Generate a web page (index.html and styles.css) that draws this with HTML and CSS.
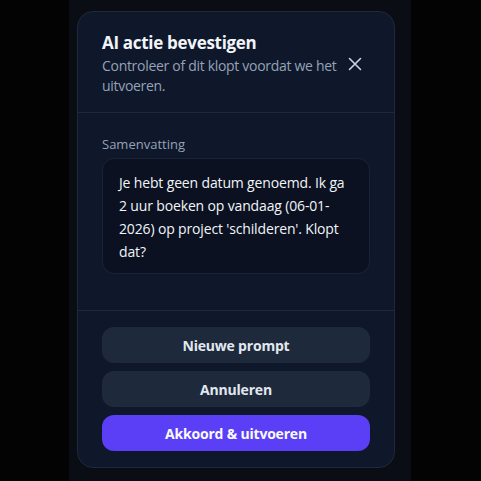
FILE: index.html
```html
<!DOCTYPE html>
<html lang="nl">
<head>
  <meta charset="UTF-8" />
  <meta name="viewport" content="width=device-width, initial-scale=1.0" />
  <title>AI actie bevestigen</title>
  <link rel="stylesheet" href="styles.css">
</head>
<body>
  <div class="app">
    <div class="modal">
      <!-- Header -->
      <div class="modal-head">
        <div class="head-text">
          <h2>AI actie bevestigen</h2>
          <p>Controleer of dit klopt voordat we het uitvoeren.</p>
        </div>
        <button class="close" aria-label="Sluiten">
          <svg width="14" height="14" viewBox="0 0 14 14" fill="none" stroke="currentColor" stroke-width="1.6" stroke-linecap="round">
            <path d="M1.5 1.5 L12.5 12.5 M12.5 1.5 L1.5 12.5" />
          </svg>
        </button>
      </div>

      <!-- Body -->
      <div class="modal-body">
        <div class="label">Samenvatting</div>
        <div class="summary">
          Je hebt geen datum genoemd. Ik ga 2 uur boeken op vandaag (06-01-2026) op project 'schilderen'. Klopt dat?
        </div>
      </div>

      <!-- Actions -->
      <div class="modal-actions">
        <button class="btn">Nieuwe prompt</button>
        <button class="btn">Annuleren</button>
        <button class="btn primary">Akkoord &amp; uitvoeren</button>
      </div>
    </div>
  </div>
</body>
</html>
```

FILE: styles.css
```css
* {
  box-sizing: border-box;
}

body {
  margin: 0;
  background: #030303;
  font-family: "Open Sans", "Noto Sans", sans-serif;
  color: #e2e8f0;
}

.app {
  width: 342px;
  min-height: 481px;
  margin-left: 69px;
  background: #0a0d14;
  padding: 11px 8px;
}

.modal {
  width: 318px;
  background: #0f172a;
  border: 1px solid #1e293b;
  border-radius: 16px;
  overflow: hidden;
}

.modal-head {
  display: flex;
  align-items: center;
  justify-content: space-between;
  padding: 19px 24px 16px;
  border-bottom: 1px solid #1e293b;
}

.head-text h2 {
  margin: 0;
  font-size: 17px;
  font-weight: 700;
  letter-spacing: -0.3px;
  line-height: 24px;
  color: #f1f5f9;
}

.head-text p {
  margin: 1px 0 0;
  font-size: 14px;
  letter-spacing: -0.3px;
  line-height: 20px;
  color: #94a3b8;
  max-width: 240px;
}

.close {
  background: none;
  border: none;
  color: #cbd5e1;
  padding: 4px;
  margin-right: 4px;
  cursor: pointer;
  display: flex;
}

.modal-body {
  padding: 22px 24px 36px;
  border-bottom: 1px solid #1e293b;
}

.label {
  font-size: 13px;
  line-height: 18px;
  color: #94a3b8;
  margin-bottom: 5px;
}

.summary {
  background: #0b1120;
  border: 1px solid #1b2435;
  border-radius: 12px;
  padding: 12px 16px 10px;
  font-size: 14px;
  letter-spacing: -0.15px;
  line-height: 23px;
  color: #f1f5f9;
}

.modal-actions {
  display: flex;
  flex-direction: column;
  gap: 8px;
  padding: 16px 24px 16px;
}

.btn {
  height: 36px;
  border: none;
  border-radius: 12px;
  background: #1e293b;
  color: #e2e8f0;
  font-family: inherit;
  font-size: 14px;
  font-weight: 700;
  letter-spacing: -0.2px;
  cursor: pointer;
}

.btn.primary {
  background: #5b3ff6;
  color: #f8fafc;
}
```
